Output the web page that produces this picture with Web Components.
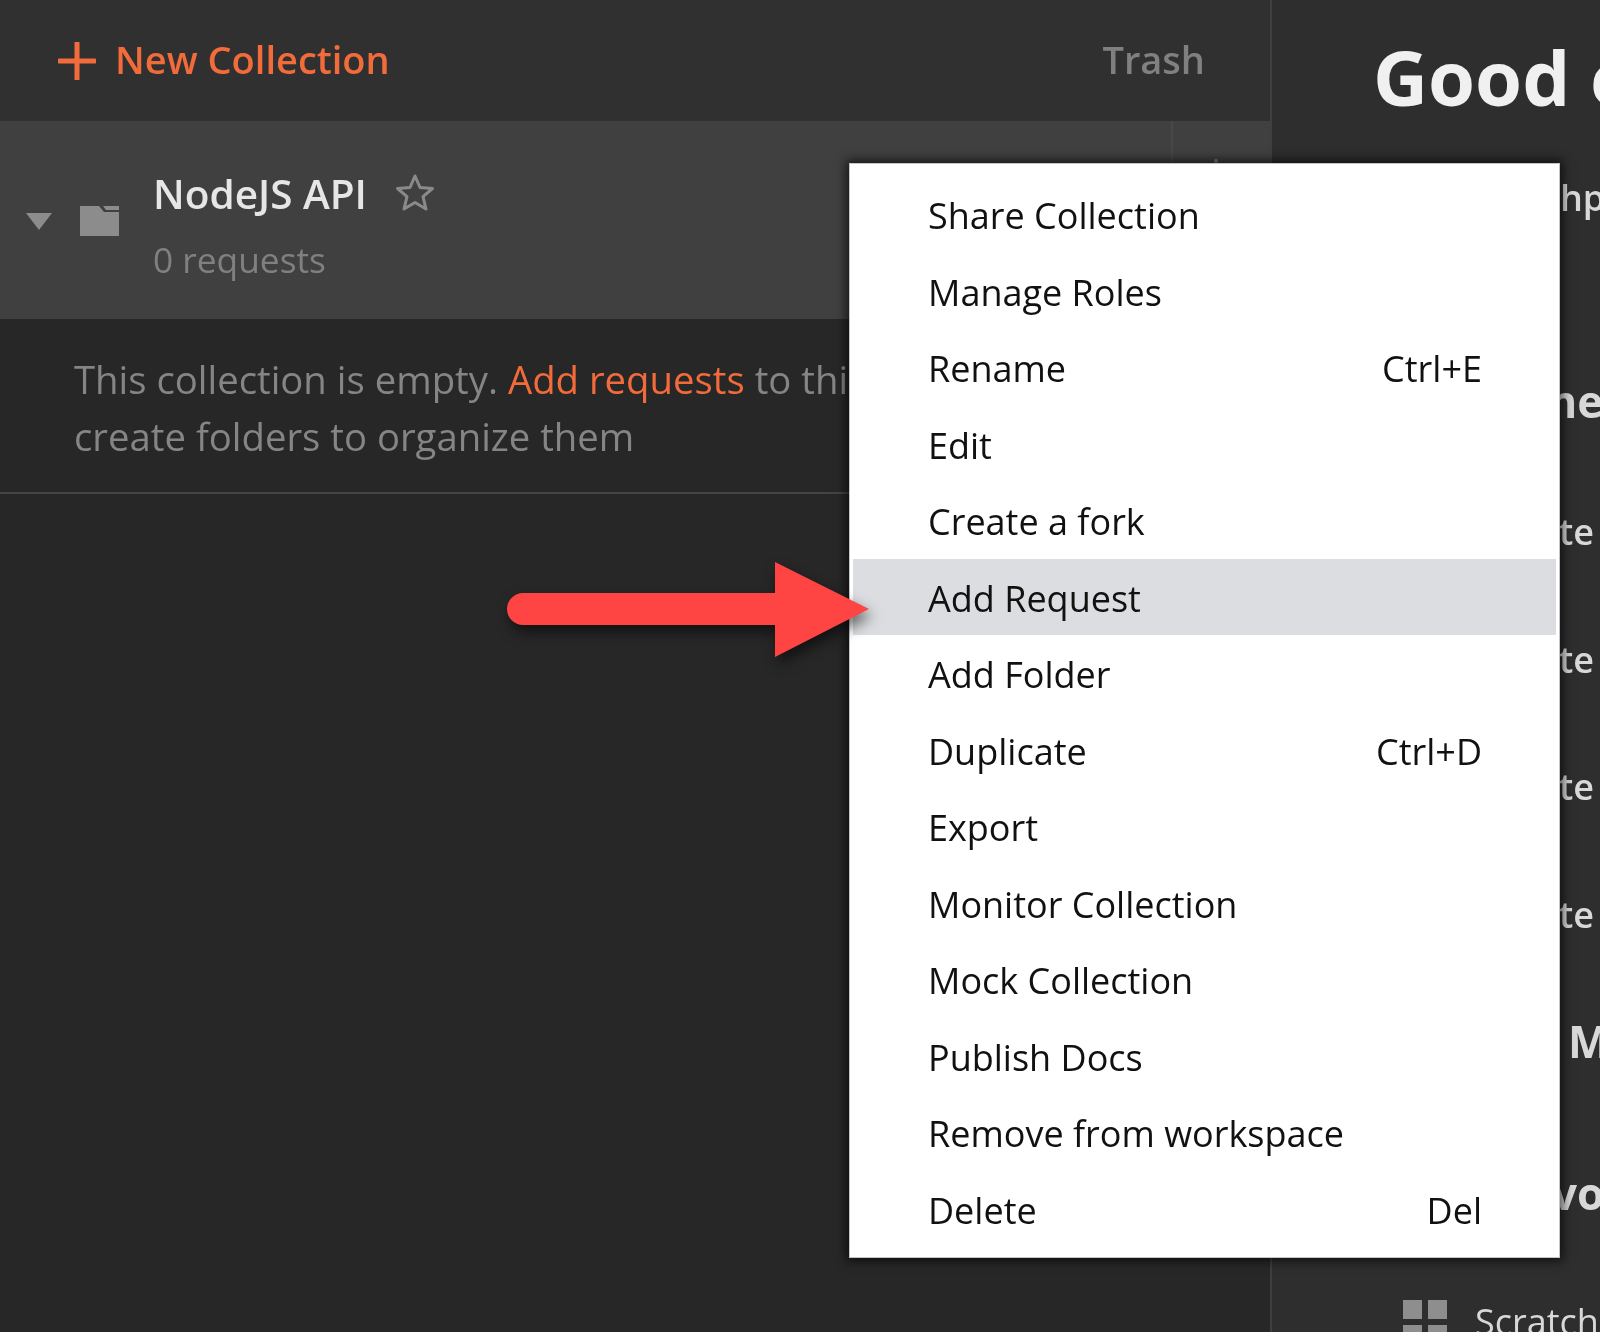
<!DOCTYPE html>
<html>
<head>
<meta charset="utf-8">
<title>Collection menu</title>
<style>
  html, body { margin: 0; height: 100%; background: #2e2e2e; overflow: hidden; }
  body { font-family: "Open Sans", "Noto Sans", sans-serif; }
</style>
</head>
<body>
<postman-app>
  <collection-sidebar slot="side">
    <sidebar-header></sidebar-header>
    <collection-row name="NodeJS API" count="0 requests"></collection-row>
    <empty-note>This collection is empty. <a>Add requests</a> to this collection and create folders to organize them</empty-note>
  </collection-sidebar>
  <launch-panel slot="main">
    <launch-line kind="title" style="--top:27px;--indent:-3px">Good e</launch-line>
    <launch-line kind="text" style="--top:47px;--indent:184px">hp</launch-line>
    <launch-line kind="head" style="--top:155px;--indent:158px">me</launch-line>
    <launch-line kind="text" style="--top:83px;--indent:183px">te</launch-line>
    <launch-line kind="text" style="--top:79.500px;--indent:183px">te</launch-line>
    <launch-line kind="text" style="--top:79.500px;--indent:183px">te</launch-line>
    <launch-line kind="text" style="--top:79.500px;--indent:183px">te</launch-line>
    <launch-line kind="head" style="--top:78px;--indent:192px">M</launch-line>
    <launch-line kind="head" style="--top:104px;--indent:176px">vo</launch-line>
    <scratch-item></scratch-item>
  </launch-panel>
  <context-menu slot="over">
    <menu-item>Share Collection</menu-item>
    <menu-item>Manage Roles</menu-item>
    <menu-item keys="Ctrl+E">Rename</menu-item>
    <menu-item>Edit</menu-item>
    <menu-item>Create a fork</menu-item>
    <menu-item active>Add Request</menu-item>
    <menu-item>Add Folder</menu-item>
    <menu-item keys="Ctrl+D">Duplicate</menu-item>
    <menu-item>Export</menu-item>
    <menu-item>Monitor Collection</menu-item>
    <menu-item>Mock Collection</menu-item>
    <menu-item>Publish Docs</menu-item>
    <menu-item>Remove from workspace</menu-item>
    <menu-item keys="Del">Delete</menu-item>
  </context-menu>
  <callout-arrow slot="over"></callout-arrow>
</postman-app>

<script>
class PmElement extends HTMLElement {
  constructor() {
    super();
    this.attachShadow({ mode: 'open' }).innerHTML = this.markup();
  }
  markup() { return '<slot></slot>'; }
}

class PostmanApp extends PmElement {
  markup() {
    return `<style>
      :host { display: grid; grid-template-columns: 1272px 1fr; height: 1332px; position: relative; overflow: hidden; }
    </style>
    <slot name="side"></slot><slot name="main"></slot><slot name="over"></slot>`;
  }
}

class CollectionSidebar extends PmElement {
  markup() {
    return `<style>
      :host { display: flex; flex-direction: column; background: #272727; border-right: 2px solid #3f3f3f; box-sizing: border-box; height: 1332px; filter: blur(.6px); }
    </style><slot></slot>`;
  }
}

class SidebarHeader extends PmElement {
  markup() {
    return `<style>
      :host { display: flex; align-items: center; height: 121px; background: #303030; padding: 0 65px 0 58px; font: 600 38px "Open Sans", sans-serif; box-sizing: border-box; }
      svg { width: 38px; height: 38px; margin-right: 19px; }
      span { margin-top: -4px; }
      .new { color: #f26b3a; flex: 1; }
      .trash { color: #808080; }
    </style>
    <svg viewBox="0 0 38 38"><path d="M19 1v36M1 19h36" stroke="#f26b3a" stroke-width="5" stroke-linecap="round"/></svg>
    <span class="new">New Collection</span><span class="trash">Trash</span>`;
  }
}

class CollectionRow extends PmElement {
  markup() {
    const name = this.getAttribute('name');
    const count = this.getAttribute('count');
    return `<style>
      :host { display: flex; align-items: center; height: 198px; background: #404040; box-sizing: border-box; position: relative; }
      .caret { width: 0; height: 0; margin-left: 26px; border: 13px solid transparent; border-top: 17px solid #8c8c8c; border-bottom: 0; margin-top: 2px; }
      .folder { margin-left: 28px; margin-top: 1px; width: 39px; height: 31px; }
      .info { margin-left: 34px; margin-top: 12px; flex: 1; }
      .name { display: flex; align-items: center; font: 600 40.500px/44px "Open Sans", sans-serif; color: #e6e6e6; }
      .name svg { width: 40px; height: 40px; margin-left: 28px; margin-top: -2px; }
      .count { font: 400 35.300px/44px "Open Sans", sans-serif; color: #808080; margin-top: 21px; }
      .tools { width: 99px; height: 100%; border-left: 2px solid #484848; box-sizing: border-box; }
      .dot { position: absolute; left: 1214px; top: 38px; width: 4px; height: 4px; background: #7a7a7a; border-radius: 50%; }
    </style>
    <span class="caret"></span>
    <svg class="folder" viewBox="0 0 39 31"><path d="M0 1h19l5 6h15v24H0zM23 1h16v4H26z" fill="#8c8c8c"/></svg>
    <div class="info">
      <div class="name">${name}<svg viewBox="0 0 40 40"><path d="M20 3l5 11.500 12.500 1-9.500 8.200 3 12.300L20 29.500 9 36l3-12.300-9.500-8.200 12.500-1z" fill="none" stroke="#8a8a8a" stroke-width="3" stroke-linejoin="round"/></svg></div>
      <div class="count">${count}</div>
    </div>
    <div class="tools"></div><span class="dot"></span>`;
  }
}

class EmptyNote extends PmElement {
  markup() {
    return `<style>
      :host { display: block; height: 175px; padding: 32px 0 0 74px; box-sizing: border-box; border-bottom: 2px solid #444; font: 400 38.300px/57px "Open Sans", sans-serif; color: #858585; }
      div { width: 1094px; }
      ::slotted(a) { color: #f26b3a; }
    </style><div><slot></slot></div>`;
  }
}

class LaunchPanel extends PmElement {
  markup() {
    return `<style>
      :host { display: block; padding-left: 104px; height: 1332px; overflow: hidden; background: #2e2e2e; filter: blur(.6px); }
    </style><slot></slot>`;
  }
}

class LaunchLine extends PmElement {
  markup() {
    return `<style>
      :host { display: block; margin-top: var(--top); margin-left: var(--indent); white-space: nowrap; color: #d8d8d8; }
      :host([kind="title"]) { font: 700 76px/100px "Open Sans", sans-serif; color: #f0f0f0; }
      :host([kind="text"]) { font: 600 36px/48px "Open Sans", sans-serif; }
      :host([kind="head"]) { font: 700 44px/48px "Open Sans", sans-serif; color: #d8d8d8; }
    </style><slot></slot>`;
  }
}

class ScratchItem extends PmElement {
  markup() {
    return `<style>
      :host { display: flex; align-items: flex-start; margin-top: 78px; margin-left: 27px; white-space: nowrap; color: #d8d8d8; font: 400 36px/48px "Open Sans", sans-serif; }
      .grid { display: grid; grid-template-columns: 19px 19px; gap: 6px; margin-top: 5px; margin-right: 28px; }
      .grid i { display: block; height: 19px; background: #8e8e8e; }
      .label { margin-top: 3px; }
    </style>
    <span class="grid"><i></i><i></i><i></i><i></i></span><span class="label">Scratch</span>`;
  }
}

class ContextMenu extends PmElement {
  markup() {
    return `<style>
      :host { position: absolute; left: 849px; top: 163px; width: 711px; height: 1095px; box-sizing: border-box; background: #fff; border: 1px solid #c4c5c9; padding: 12px 3px; box-shadow: 0 0 10px 3px rgba(0,0,0,.65); z-index: 2; filter: blur(.35px); }
    </style><slot></slot>`;
  }
}

class MenuItem extends PmElement {
  markup() {
    const keys = this.getAttribute('keys');
    return `<style>
      :host { display: flex; align-items: center; justify-content: space-between; height: 76.5px; padding: 3px 74px 0 75px; box-sizing: border-box; font: 400 36px "Open Sans", sans-serif; color: #111; white-space: nowrap; }
      :host([active]) { background: #dcdde0; }
    </style><span><slot></slot></span>${keys ? `<span>${keys}</span>` : ''}`;
  }
}

class CalloutArrow extends PmElement {
  markup() {
    return `<style>
      :host { position: absolute; left: 500px; top: 555px; width: 380px; height: 115px; z-index: 3; filter: blur(.4px); }
      svg { display: block; overflow: visible; filter: drop-shadow(3px 7px 7px rgba(0,0,0,.55)); }
    </style>
    <svg width="380" height="115" viewBox="0 0 380 115"><path d="M23 38H275V7L369 54 275 102V70H23a16 16 0 0 1 0-32z" fill="#ff4444"/></svg>`;
  }
}

customElements.define('postman-app', PostmanApp);
customElements.define('collection-sidebar', CollectionSidebar);
customElements.define('sidebar-header', SidebarHeader);
customElements.define('collection-row', CollectionRow);
customElements.define('empty-note', EmptyNote);
customElements.define('launch-panel', LaunchPanel);
customElements.define('launch-line', LaunchLine);
customElements.define('scratch-item', ScratchItem);
customElements.define('context-menu', ContextMenu);
customElements.define('menu-item', MenuItem);
customElements.define('callout-arrow', CalloutArrow);
</script>
</body>
</html>
